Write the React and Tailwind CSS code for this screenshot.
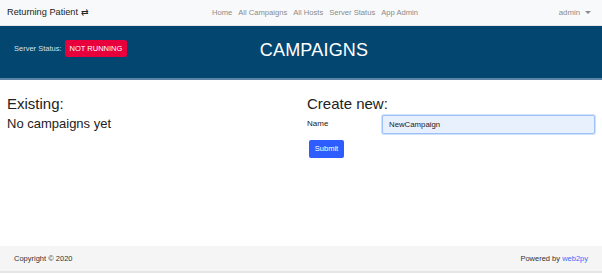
import React from 'react';

const App = () => {
  return (
    <div className="w-[602px] h-[275px] bg-white flex flex-col overflow-hidden" style={{ fontFamily: '"Liberation Sans", Arial, sans-serif' }}>
      {/* Navbar */}
      <nav className="h-[26px] bg-[#f8f9fa] flex items-center px-[7px] border-b border-[#e5e7ea]">
        <span className="text-[9.2px] text-[#222] w-[205px]">Returning Patient ⇄</span>
        <div className="flex-1 flex gap-[6px] text-[7.6px] text-[#8a8a8a]">
          <a href="#">Home</a>
          <a href="#">All Campaigns</a>
          <a href="#">All Hosts</a>
          <a href="#">Server Status</a>
          <a href="#">App Admin</a>
        </div>
        <span className="text-[7.8px] text-[#8a8a8a] pr-[4px] flex items-center gap-[5px]">
          admin
          <span className="inline-block w-0 h-0 border-l-[3px] border-r-[3px] border-t-[3px] border-l-transparent border-r-transparent border-t-[#8a8a8a]"></span>
        </span>
      </nav>

      {/* Header */}
      <header className="h-[54px] bg-[#03466f] border-b-2 border-[#5b85a8] relative flex items-center justify-center">
        <div className="absolute left-[14px] top-[14px] flex items-center gap-[3px]">
          <span className="text-[7.5px] text-[#d5e0ea]">Server Status:</span>
          <span className="bg-[#e8003d] text-white text-[7.5px] rounded-[2px] px-[5px] h-[17px] flex items-center">NOT RUNNING</span>
        </div>
        <h1 className="text-[18px] text-white tracking-[0.2px] pl-[26px] -mt-[4px]">CAMPAIGNS</h1>
      </header>

      {/* Main */}
      <main className="flex-1 flex px-[7px] pt-[14px]">
        <section className="w-[301px] text-[#222]">
          <h2 className="text-[15px] leading-[20px]">Existing:</h2>
          <p className="text-[13px] leading-[18px] mt-[1px]">No campaigns yet</p>
        </section>
        <section className="flex-1 text-[#222]">
          <h2 className="text-[15px] leading-[20px]">Create new:</h2>
          <div className="flex items-start mt-[1px]">
            <label className="text-[8px] w-[75px] pt-[3px]">Name</label>
            <input
              defaultValue="NewCampaign"
              className="w-[213px] h-[19px] bg-[#e8f0fe] border border-[#9ec1f7] rounded-[2px] px-[6px] text-[7.8px] text-[#222] outline-none shadow-[0_0_0_1px_rgba(140,180,250,0.4)]"
            />
          </div>
          <button className="mt-[6px] ml-[2px] bg-[#2d5cff] text-white text-[7.5px] rounded-[2px] w-[35px] h-[18px]">Submit</button>
        </section>
      </main>

      {/* Footer */}
      <footer className="h-[27px] bg-[#f5f5f5] border-b-2 border-[#e6e6e6] flex items-center justify-between px-[14px] text-[7.5px] text-[#333] mb-[2px]">
        <span>Copyright © 2020</span>
        <span>Powered by <a href="#" className="text-[#3b6ef8]">web2py</a></span>
      </footer>
    </div>
  );
};

export default App;
